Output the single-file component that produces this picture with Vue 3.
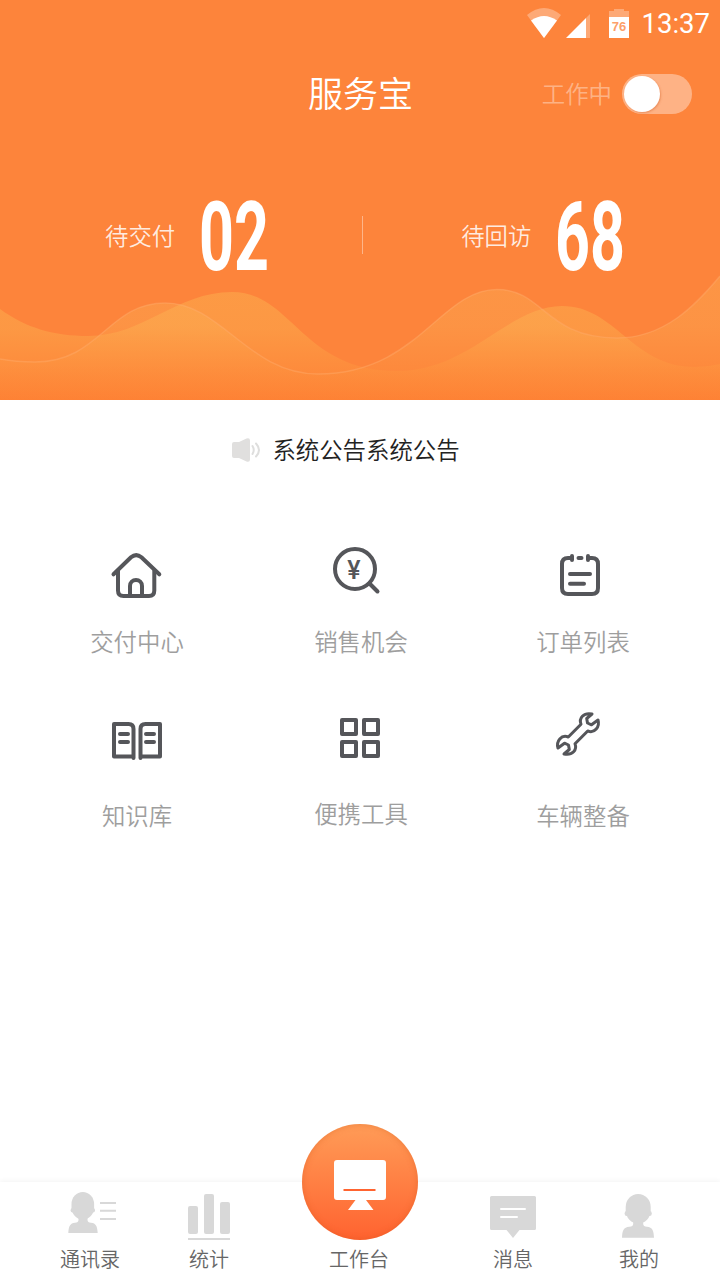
<script setup>
import { ref } from 'vue'

const working = ref(false)

const stats = [
  { label: '待交付', value: '02' },
  { label: '待回访', value: '68' }
]

const menus = [
  { icon: 'house', label: '交付中心' },
  { icon: 'search', label: '销售机会' },
  { icon: 'order', label: '订单列表' },
  { icon: 'book', label: '知识库' },
  { icon: 'grid', label: '便携工具' },
  { icon: 'wrench', label: '车辆整备' }
]

const tabs = [
  { key: 'contacts', label: '通讯录' },
  { key: 'chart', label: '统计' },
  { key: 'desk', label: '工作台' },
  { key: 'message', label: '消息' },
  { key: 'mine', label: '我的' }
]
</script>

<template>
  <div class="page">
    <header class="header">
      <!-- 波浪背景 -->
      <svg class="waves" width="720" height="130" viewBox="0 0 720 130">
        <defs>
          <linearGradient id="waveA" gradientUnits="userSpaceOnUse" x1="0" y1="20" x2="0" y2="130">
            <stop offset="0" stop-color="#fcb450" stop-opacity="0.46" />
            <stop offset="0.35" stop-color="#fcb450" stop-opacity="0.42" />
            <stop offset="1" stop-color="#ff8030" stop-opacity="0.4" />
          </linearGradient>
          <linearGradient id="waveB" gradientUnits="userSpaceOnUse" x1="0" y1="6" x2="0" y2="130">
            <stop offset="0" stop-color="#fcb458" stop-opacity="0.36" />
            <stop offset="0.4" stop-color="#fcb458" stop-opacity="0.32" />
            <stop offset="1" stop-color="#ff8030" stop-opacity="0.3" />
          </linearGradient>
        </defs>
        <path fill="url(#waveA)" d="M0 39C26 58 54 66 88 66C144 66 176 22 232 22C292 22 302 101 397 101C470 101 508 36 562 36C616 36 632 97 695 97Q708 97 720 94V130H0Z" />
        <path fill="url(#waveB)" d="M0 89Q16 92 35 92C100 92 108 33 165 33C222 33 248 104 318 104C418 104 440 19.500 497 19.500C544 19.500 545 68 617 68C664 68 695 36 720 6V130H0Z" />
        <path class="wave-line" d="M0 89Q16 92 35 92C100 92 108 33 165 33C222 33 248 104 318 104C418 104 440 19.500 497 19.500C544 19.500 545 68 617 68C664 68 695 36 720 6" />
      </svg>

      <div class="status-bar">
        <svg class="status-icons" width="106" height="32" viewBox="0 0 106 32">
          <path fill="#fff" fill-opacity="0.3" d="M1 9Q18 -5 35 9L18 32Z" />
          <path fill="#fff" d="M5 14.500Q18 5.500 31 14.500L18 32Z" />
          <path fill="#fff" fill-opacity="0.3" d="M64 8V32H60V12Z" />
          <path fill="#fff" d="M60 12V32H40Z" />
          <path fill="#fff" fill-opacity="0.3" d="M83 11V5H88V3H98V5H103V11Z" />
          <path fill="#fff" d="M83 11H103V32H83Z" />
          <text x="93" y="25" class="battery-text">76</text>
        </svg>
        <span class="time">13:37</span>
      </div>

      <div class="title-bar">
        <h1 class="title">服务宝</h1>
        <div class="work">
          <span class="work-text">工作中</span>
          <button class="switch" :class="{ on: working }" @click="working = !working">
            <i class="knob"></i>
          </button>
        </div>
      </div>

      <div class="stats">
        <div v-for="item in stats" :key="item.label" class="stat">
          <span class="stat-label">{{ item.label }}</span>
          <span class="stat-value">{{ item.value }}</span>
        </div>
      </div>
    </header>

    <div class="notice">
      <svg width="30" height="26" viewBox="0 0 30 26">
        <path fill="#e0dfde" d="M3 5H8L15.500 1.500Q19 0.500 19 3.500V22.500Q19 25.500 15.500 24.500L8 21H3Q1 21 1 19V7Q1 5 3 5Z" />
        <path fill="none" stroke="#dededd" stroke-width="2" stroke-linecap="round" d="M21.500 9Q24 13 21.500 17M25 6.500Q31 13 25 19.500" />
      </svg>
      <span class="notice-text">系统公告系统公告</span>
    </div>

    <main class="menus">
      <div v-for="item in menus" :key="item.icon" class="menu" :class="item.icon">
        <svg class="menu-icon" width="60" height="60" viewBox="0 0 60 60">
          <g v-if="item.icon === 'house'">
            <path d="M6.500 29.300L24 12.300Q29.200 7.800 34.400 12.300L52.300 29.300" />
            <path d="M11 26V45.500Q11 51 16.500 51H42Q47.300 51 47.300 45.500V26" />
            <path d="M23 51V41a6 6 0 0 1 12 0V51" />
          </g>
          <g v-else-if="item.icon === 'search'">
            <circle cx="25" cy="24" r="20" />
            <path d="M39.500 38.500L47.500 46.500" />
            <text x="24" y="34" class="yen">¥</text>
          </g>
          <g v-else-if="item.icon === 'order'">
            <path d="M19 13H15Q9 13 9 19V43Q9 49 15 49H39Q45 49 45 43V19Q45 13 39 13H35" />
            <path d="M19 11V15M35 11V15M25.500 13H28.500M17 29H37M17 38.700H31" />
          </g>
          <g v-else-if="item.icon === 'book'">
            <path d="M26.500 50V21Q26.500 16 21.500 16H7V48.500H26.500M33.500 50V21Q33.500 16 38.500 16H53V48.500H33.500" />
            <path d="M13 26H21M13 34H21M39 26H47M39 34H47" />
          </g>
          <g v-else-if="item.icon === 'grid'">
            <rect x="12" y="12" width="14" height="14" />
            <rect x="34" y="12" width="14" height="14" />
            <rect x="12" y="34" width="14" height="14" />
            <rect x="34" y="34" width="14" height="14" />
          </g>
          <g v-else class="thin">
            <path d="M28 16.300C25.700 10.300 30.300 4.300 39 6L33.700 10.500L34.500 15L38.500 16.800L45 12C47 18.700 41.700 25.700 34.700 23L22 35.700C24.300 41.700 19.700 47.700 11 46L16.300 41.500L15.500 37L11.500 35.200L5 40C3 33.300 8.300 26.300 15.300 29Z" />
          </g>
        </svg>
        <span class="menu-label">{{ item.label }}</span>
      </div>
    </main>

    <nav class="tab-bar">
      <a v-for="tab in tabs" :key="tab.key" class="tab" :class="tab.key">
        <span v-if="tab.key === 'desk'" class="desk-btn">
          <svg width="52" height="50" viewBox="0 0 52 50">
            <path fill="#fff" d="M3 0H49Q52 0 52 3V37Q52 40 49 40H32L39.500 50H14L21.500 40H3Q0 40 0 37V3Q0 0 3 0Z" />
            <path stroke="#ff6430" stroke-width="2" d="M9.500 30H41.500" />
          </svg>
        </span>
        <svg v-else class="tab-icon" width="60" height="54" viewBox="0 0 60 54">
          <g v-if="tab.key === 'contacts'">
            <rect x="11.500" y="4" width="22.600" height="27.500" rx="11.300" ry="12" />
            <rect x="10.600" y="20" width="24.400" height="4.500" rx="2" />
            <path d="M18.500 29H27.500V32Q27.500 34.500 31 34.700C36 35.200 37.200 38 37.700 45H8.300C8.800 38 10 35.200 15 34.700Q18.500 34.500 18.500 32Z" />
            <path class="line" d="M40 15H56M40 22.700H56M40 31H56" />
          </g>
          <g v-else-if="tab.key === 'chart'">
            <rect x="9" y="18" width="10" height="28" rx="2" />
            <rect x="25" y="6" width="10" height="40" rx="2" />
            <rect x="41" y="14" width="10" height="32" rx="2" />
            <path class="line" d="M9 51H51" />
          </g>
          <g v-else-if="tab.key === 'message'">
            <path d="M8.500 8H51.500Q53 8 53 9.500V40.500Q53 42 51.500 42H36.500L30 50L23.500 42H8.500Q7 42 7 40.500V9.500Q7 8 8.500 8Z" />
            <path class="line white" d="M18 21H42M18 29H34" />
          </g>
          <g v-else>
            <rect x="16.700" y="6" width="25" height="29.500" rx="12.500" ry="13" />
            <rect x="15.600" y="23" width="27.200" height="5" rx="2.200" />
            <path d="M24.200 33H34.200V36Q34.200 38.500 38 38.700C43.500 39.300 44.700 42.500 45 49.700H13C13.300 42.500 14.500 39.300 20.300 38.700Q24.200 38.500 24.200 36Z" />
          </g>
        </svg>
        <span class="tab-label">{{ tab.label }}</span>
      </a>
    </nav>
  </div>
</template>

<style>
body {
  background: #fff;
}
</style>

<style scoped>
.page {
  width: 720px;
  height: 1280px;
  display: flex;
  flex-direction: column;
  overflow: hidden;
  background: #fff;
  font-family: "Noto Sans CJK SC DemiLight", "Noto Sans CJK SC", sans-serif;
  font-weight: 350;
}

.header {
  position: relative;
  height: 400px;
  flex: none;
  color: #fff;
  background: #fd843b;
}

.waves {
  position: absolute;
  left: 0;
  bottom: 0;
}

.wave-line {
  fill: none;
  stroke: #ffb070;
  stroke-opacity: 0.4;
  stroke-width: 1.5;
}

.status-bar {
  height: 46px;
  display: flex;
  justify-content: flex-end;
  align-items: center;
  gap: 10px;
  padding-right: 10px;
  box-sizing: border-box;
}

.status-icons {
  margin-bottom: 2px;
}

.battery-text {
  font: bold 13px "Liberation Sans", sans-serif;
  text-anchor: middle;
  fill: #fda06a;
}

.time {
  padding-top: 2px;
  font: 400 27.5px/44px Roboto, sans-serif;
}

.title-bar {
  height: 96px;
  display: grid;
  grid-template-columns: 1fr auto 1fr;
  align-items: center;
  padding-right: 28px;
  padding-left: 28px;
}

.title {
  grid-column: 2;
  margin: 0 0 5px 1px;
  font-size: 35px;
  line-height: 48px;
  font-weight: 350;
}

.work {
  display: flex;
  justify-content: flex-end;
  align-items: center;
  gap: 10px;
}

.work-text {
  padding-bottom: 2px;
  font-size: 23.4px;
  color: rgba(255, 255, 255, 0.4);
}

.switch {
  width: 70px;
  height: 40px;
  padding: 2px;
  border: none;
  border-radius: 20px;
  background: rgba(255, 255, 255, 0.38);
  display: flex;
}

.switch.on {
  justify-content: flex-end;
}

.knob {
  width: 36px;
  height: 36px;
  border-radius: 50%;
  background: #fff;
  box-shadow: 1px 1px 2px rgba(200, 80, 20, 0.35);
}

.stats {
  display: flex;
  padding: 43px 0 0 105px;
}

.stat {
  height: 100px;
  display: flex;
  align-items: center;
  gap: 24px;
}

.stat + .stat::before {
  content: "";
  width: 1px;
  height: 38px;
  margin: 0 74px 0 92px;
  background: rgba(255, 255, 255, 0.4);
}

.stat-label {
  font-size: 23.4px;
  color: rgba(255, 255, 255, 0.85);
}

.stat-value {
  width: 71px;
  padding-top: 4px;
  font: 700 96px/100px Roboto, sans-serif;
  transform: scaleX(0.635);
  transform-origin: left;
}

.notice {
  display: flex;
  align-items: center;
  justify-content: center;
  gap: 11px;
  height: 100px;
  padding-right: 29px;
  font-size: 23.4px;
  color: #222;
}

.notice-text {
  padding-bottom: 2px;
}

.menus {
  display: grid;
  grid-template-columns: repeat(3, 223px);
  grid-template-rows: 163px 163px;
  justify-content: center;
  padding-top: 45px;
}

.menu {
  display: flex;
  flex-direction: column;
  align-items: center;
}

.menu-icon {
  fill: none;
  stroke: #55565a;
  stroke-width: 4;
  stroke-linecap: round;
  stroke-linejoin: round;
}

.thin {
  stroke-width: 3;
}

.yen {
  font: 500 25px Roboto, sans-serif;
  text-anchor: middle;
  fill: #55565a;
  stroke: none;
}

.menu-label {
  margin-top: 19px;
  font-size: 23.4px;
  line-height: 34px;
  color: #9e9e9e;
}

.book .menu-label,
.wrench .menu-label {
  margin-top: 30px;
}

.grid .menu-label {
  margin-top: 28px;
}

.search .menu-label,
.grid .menu-label {
  padding-left: 2px;
}

.tab-bar {
  display: grid;
  grid-template-columns: 120px 118px 182px 126px 126px;
  grid-template-rows: 98px;
  height: 98px;
  margin-top: auto;
  padding-left: 30px;
  box-shadow: 0 -1px 5px rgba(0, 0, 0, 0.05);
  background: #fff;
}

.tab {
  display: flex;
  flex-direction: column;
  align-items: center;
  justify-content: flex-end;
}

.tab-icon {
  flex: none;
  margin-bottom: -2px;
  fill: #d8d8d8;
}

.line {
  stroke: #d8d8d8;
  stroke-width: 2;
}

.line.white {
  stroke: #fff;
  stroke-linecap: round;
}

.desk-btn {
  flex: none;
  width: 116px;
  height: 116px;
  margin-left: 2px;
  border-radius: 50%;
  display: flex;
  align-items: center;
  justify-content: center;
  background: linear-gradient(#ff9c57, #ff6330);
  box-shadow: inset 0 0 6px rgba(200, 80, 20, 0.35);
}

.desk-btn svg {
  margin-top: 6px;
}

.tab-label {
  flex: none;
  height: 40px;
  font-size: 20px;
  line-height: 38px;
  color: #666;
}
</style>
